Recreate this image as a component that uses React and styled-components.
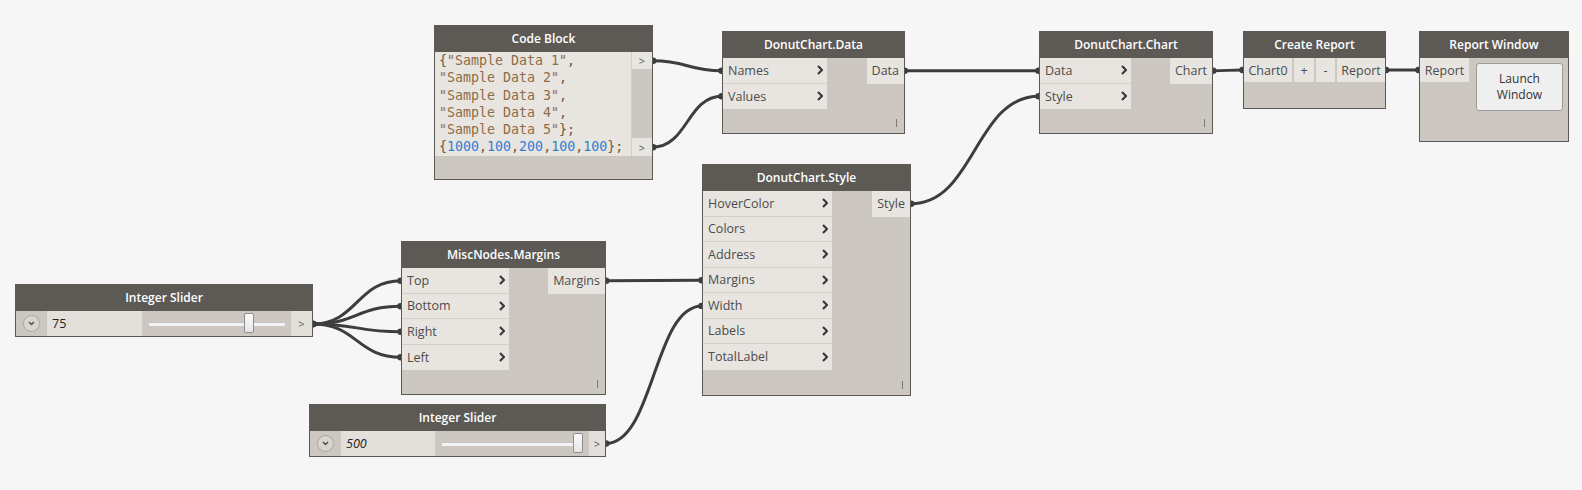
import React from 'react'
import styled, { createGlobalStyle } from 'styled-components'

const HEADER = 27
const ROW = 25.5
const CODE_LINE = 17.3

const GlobalStyle = createGlobalStyle`
  html, body {
    margin: 0;
    padding: 0;
    background: #f6f6f6;
  }
`

const Canvas = styled.div`
  position: relative;
  width: 1582px;
  height: 490px;
  overflow: hidden;
  background: #f6f6f6;
  font-family: "Open Sans", "Noto Sans", sans-serif;
`

const WireLayer = styled.svg`
  position: absolute;
  left: 0;
  top: 0;
  width: 1582px;
  height: 490px;
  pointer-events: none;
`

const Node = styled.div`
  position: absolute;
  left: ${p => p.$x}px;
  top: ${p => p.$y}px;
  width: ${p => p.$w}px;
  box-sizing: border-box;
  border: 1px solid #5b5955;
  border-top: none;
  background: #ccc8c1;
  z-index: 1;
`

const Header = styled.div`
  height: ${p => p.$h || HEADER}px;
  margin: 0 -1px;
  background: #5d5a56;
  color: #fff;
  font-size: 12px;
  font-weight: 600;
  display: flex;
  align-items: center;
  justify-content: center;
  white-space: nowrap;
`

const Ports = styled.div`
  display: flex;
  justify-content: space-between;
  align-items: flex-start;
`

const InputCol = styled.div`
  width: ${p => p.$w}px;
  display: flex;
  flex-direction: column;
`

const InputRow = styled.div`
  height: ${ROW}px;
  box-sizing: border-box;
  border-bottom: ${p => (p.$last ? 'none' : '1px solid #d2cec8')};
  background: #e8e5e0;
  display: flex;
  align-items: center;
  justify-content: space-between;
  padding: 0 4px 0 5px;
  font-size: 12.5px;
  color: #4c4c4c;
`

const OutputCell = styled.div`
  height: ${p => p.$h || ROW}px;
  box-sizing: border-box;
  background: #e8e5e0;
  display: flex;
  align-items: center;
  padding: 0 5px;
  font-size: 12.5px;
  color: #4c4c4c;
  white-space: nowrap;
`

const Footer = styled.div`
  height: ${p => p.$h}px;
  display: flex;
  justify-content: flex-end;
  align-items: flex-end;
  padding: 0 7px 6px 0;
  box-sizing: border-box;
`

const Lacing = styled.span`
  width: 1px;
  height: 8px;
  background: #7c7974;
`

/* code block */
const CodeBody = styled.div`
  display: flex;
`

const CodeArea = styled.div`
  flex: 1;
  background: #e8e5e0;
  padding-left: 4px;
  font-family: "DejaVu Sans Mono", "Liberation Mono", monospace;
  font-size: 13.3px;
`

const CodeLine = styled.div`
  height: ${CODE_LINE}px;
  line-height: ${CODE_LINE}px;
  white-space: pre;
  color: #6f5740;
`

const Str = styled.span`
  color: #8f6c46;
`

const Num = styled.span`
  color: #2f7fd6;
`

const PortCol = styled.div`
  width: 20px;
  border-left: 1px solid #d2cec8;
  display: flex;
  flex-direction: column;
  justify-content: space-between;
`

const CodePort = styled.div`
  height: ${CODE_LINE}px;
  background: #e8e5e0;
  color: #555;
  font-size: 11px;
  display: flex;
  align-items: center;
  justify-content: center;
`

/* create report / report window */
const CellRow = styled.div`
  display: flex;
  gap: 2px;
  align-items: flex-start;
`

const Cell = styled(OutputCell)`
  height: 24px;
  width: ${p => (p.$w ? `${p.$w}px` : 'auto')};
  flex: ${p => (p.$grow ? 1 : 'none')};
  justify-content: center;
  padding: 0 3px;
`

const WindowBody = styled.div`
  display: flex;
  align-items: flex-start;
  height: 83px;
`

const LaunchButton = styled.div`
  margin: 5px 0 0 7px;
  width: 87px;
  height: 48px;
  box-sizing: border-box;
  border: 1px solid #9d9b98;
  border-radius: 3px;
  background: #efefef;
  font-size: 12px;
  line-height: 16px;
  color: #333;
  display: flex;
  align-items: center;
  justify-content: center;
  text-align: center;
`

/* slider */
const SliderBody = styled.div`
  display: flex;
  height: 25px;
  align-items: stretch;
`

const DropArea = styled.div`
  width: ${p => p.$w}px;
  display: flex;
  align-items: center;
  justify-content: center;
`

const DropCircle = styled.div`
  width: 15px;
  height: 15px;
  border-radius: 50%;
  border: 1px solid #a9a6a1;
  background: #d9d5cf;
  display: flex;
  align-items: center;
  justify-content: center;
`

const ValueBox = styled.div`
  width: ${p => p.$w}px;
  background: #e3e0db;
  display: flex;
  align-items: center;
  padding-left: 5px;
  box-sizing: border-box;
  font-size: 12.5px;
  font-style: ${p => (p.$italic ? 'italic' : 'normal')};
  color: #222;
`

const TrackArea = styled.div`
  flex: 1;
  position: relative;
  display: flex;
  align-items: center;
  padding: 0 6px 0 7px;
`

const Track = styled.div`
  flex: 1;
  height: 3px;
  background: #f3f3f3;
  border-top: 1px solid #c4c4c4;
  border-radius: 1px;
`

const Thumb = styled.div`
  position: absolute;
  top: 2px;
  width: 10px;
  height: 20px;
  box-sizing: border-box;
  border: 1px solid #8e8e8e;
  border-radius: 2px;
  background: linear-gradient(#fafafa, #e6e6e6);
`

const SliderPort = styled.div`
  width: ${p => p.$w}px;
  background: #e3e0db;
  color: #555;
  font-size: 11px;
  display: flex;
  align-items: center;
  justify-content: center;
`

const Chevron = () => (
  <svg width="6" height="10" viewBox="0 0 6 10">
    <polyline points="1,1 5,5 1,9" fill="none" stroke="#3a3a3a" strokeWidth="2.2" />
  </svg>
)

const DownChevron = () => (
  <svg width="7" height="5" viewBox="0 0 7 5">
    <polyline points="1,1 3.5,3.5 6,1" fill="none" stroke="#4a4a4a" strokeWidth="1.4" />
  </svg>
)

function PortNode({ x, y, w, title, inputs, inputWidth, outputs, footer = 24 }) {
  return (
    <Node $x={x} $y={y} $w={w}>
      <Header>{title}</Header>
      <Ports>
        <InputCol $w={inputWidth}>
          {inputs.map((name, i) => (
            <InputRow key={name} $last={i === inputs.length - 1}>
              {name}
              <Chevron />
            </InputRow>
          ))}
        </InputCol>
        {outputs.map(o => (
          <OutputCell key={o}>{o}</OutputCell>
        ))}
      </Ports>
      <Footer $h={footer}>
        <Lacing />
      </Footer>
    </Node>
  )
}

function Slider({ x, y, w, value, italic, pos, widths }) {
  const [drop, box, port] = widths
  return (
    <Node $x={x} $y={y} $w={w}>
      <Header $h={27}>Integer Slider</Header>
      <SliderBody>
        <DropArea $w={drop}>
          <DropCircle>
            <DownChevron />
          </DropCircle>
        </DropArea>
        <ValueBox $w={box} $italic={italic}>{value}</ValueBox>
        <TrackArea>
          <Track />
          <Thumb style={{ left: `calc(${pos}% - 5px)` }} />
        </TrackArea>
        <SliderPort $w={port}>&gt;</SliderPort>
      </SliderBody>
    </Node>
  )
}

const wires = [
  [652.7, 60.7, 722, 70.75],
  [652.7, 147.2, 722, 96.25],
  [904.3, 70.75, 1039, 70.75],
  [910.7, 203.75, 1039, 96.25],
  [1212.7, 70.75, 1243, 70],
  [1385.7, 70, 1419, 70],
  [605.7, 280.75, 702, 280.25],
  [605.7, 443.5, 702, 305.9],
  [312.7, 324, 401, 280.75],
  [312.7, 324, 401, 306.25],
  [312.7, 324, 401, 331.75],
  [312.7, 324, 401, 357.25],
]

function bezier([x1, y1, x2, y2]) {
  const d = (x2 - x1) * 0.5
  return `M${x1} ${y1} C${x1 + d} ${y1}, ${x2 - d} ${y2}, ${x2} ${y2}`
}

export default function App() {
  return (
    <>
      <GlobalStyle />
      <Canvas>
        <WireLayer viewBox="0 0 1582 490">
          {wires.map((w, i) => (
            <g key={i}>
              <path d={bezier(w)} fill="none" stroke="#3d3d3d" strokeWidth="3" />
              <circle cx={w[0] + 0.5} cy={w[1]} r="3.2" fill="#3d3d3d" />
              <circle cx={w[2] - 0.5} cy={w[3]} r="3.2" fill="#3d3d3d" />
            </g>
          ))}
        </WireLayer>

        <Node $x={434} $y={25} $w={219}>
          <Header>Code Block</Header>
          <CodeBody>
            <CodeArea>
              <CodeLine>{'{'}<Str>"Sample Data 1"</Str>,</CodeLine>
              <CodeLine><Str>"Sample Data 2"</Str>,</CodeLine>
              <CodeLine><Str>"Sample Data 3"</Str>,</CodeLine>
              <CodeLine><Str>"Sample Data 4"</Str>,</CodeLine>
              <CodeLine><Str>"Sample Data 5"</Str>{'};'}</CodeLine>
              <CodeLine>
                {'{'}<Num>1000</Num>,<Num>100</Num>,<Num>200</Num>,<Num>100</Num>,<Num>100</Num>{'};'}
              </CodeLine>
            </CodeArea>
            <PortCol>
              <CodePort>&gt;</CodePort>
              <CodePort>&gt;</CodePort>
            </PortCol>
          </CodeBody>
          <Footer $h={23} />
        </Node>

        <PortNode x={722} y={31} w={183} title="DonutChart.Data"
          inputs={['Names', 'Values']} inputWidth={104} outputs={['Data']} />

        <PortNode x={1039} y={31} w={174} title="DonutChart.Chart"
          inputs={['Data', 'Style']} inputWidth={91} outputs={['Chart']} />

        <Node $x={1243} $y={31} $w={143}>
          <Header>Create Report</Header>
          <CellRow>
            <Cell $w={48}>Chart0</Cell>
            <Cell $w={20}>+</Cell>
            <Cell $w={19}>-</Cell>
            <Cell $grow>Report</Cell>
          </CellRow>
          <Footer $h={26} />
        </Node>

        <Node $x={1419} $y={31} $w={150}>
          <Header>Report Window</Header>
          <WindowBody>
            <Cell $w={49}>Report</Cell>
            <LaunchButton>Launch<br />Window</LaunchButton>
          </WindowBody>
        </Node>

        <PortNode x={702} y={164} w={209} title="DonutChart.Style"
          inputs={['HoverColor', 'Colors', 'Address', 'Margins', 'Width', 'Labels', 'TotalLabel']}
          inputWidth={129} outputs={['Style']} footer={25} />

        <PortNode x={401} y={241} w={205} title="MiscNodes.Margins"
          inputs={['Top', 'Bottom', 'Right', 'Left']} inputWidth={107} outputs={['Margins']} footer={24} />

        <Slider x={15} y={284} w={298} value="75" pos={72} widths={[31, 95, 21]} />
        <Slider x={309} y={404} w={297} value="500" italic pos={93} widths={[31, 94, 16]} />
      </Canvas>
    </>
  )
}
